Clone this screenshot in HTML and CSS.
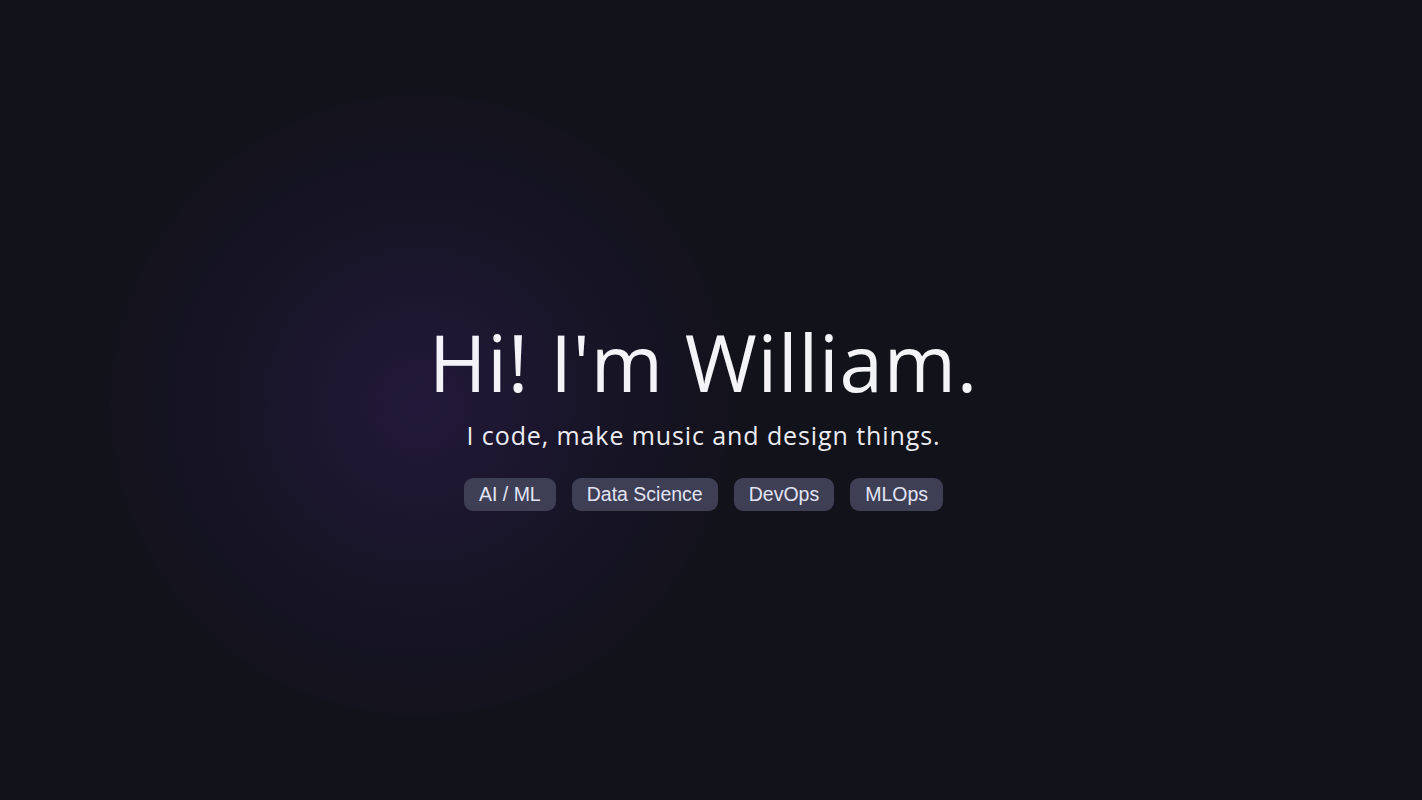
FILE: index.html
```html
<!DOCTYPE html>
<html lang="en">
<head>
<meta charset="utf-8">
<title>William</title>
<link rel="stylesheet" href="styles.css">
</head>
<body>
<main class="hero">
  <div class="glow"></div>
  <div class="content">
    <h1 class="title">Hi! I'm William.</h1>
    <p class="subtitle">I code, make music and design things.</p>
    <ul class="tags">
      <li class="tag">AI / ML</li>
      <li class="tag">Data Science</li>
      <li class="tag">DevOps</li>
      <li class="tag">MLOps</li>
    </ul>
  </div>
</main>
</body>
</html>
```

FILE: styles.css
```css
html, body {
  margin: 0;
  padding: 0;
  height: 100%;
}
body {
  background: #12121b;
  overflow: hidden;
}
.hero {
  position: relative;
  height: 800px;
  display: flex;
  align-items: center;
  justify-content: center;
  padding-right: 15px;
  box-sizing: border-box;
}
.glow {
  position: absolute;
  left: 110px;
  top: 95px;
  width: 620px;
  height: 620px;
  border-radius: 50%;
  background: radial-gradient(circle at center, rgba(40, 28, 70, 0.72) 0%, rgba(32, 24, 56, 0.5) 35%, rgba(24, 20, 40, 0.2) 65%, rgba(18, 18, 27, 0) 100%);
}
.content {
  position: relative;
  display: flex;
  flex-direction: column;
  align-items: center;
  margin-top: 34px;
}
.title {
  margin: 0;
  font-family: "Open Sans", sans-serif;
  font-weight: 400;
  font-size: 78px;
  line-height: 1;
  color: #f4f4f8;
  letter-spacing: 0.8px;
}
.subtitle {
  margin: 19px 0 0;
  font-family: "Open Sans", sans-serif;
  font-size: 25px;
  line-height: 1.2;
  color: #ececf2;
  letter-spacing: 0.9px;
}
.tags {
  list-style: none;
  margin: 28px 0 0;
  padding: 0;
  display: flex;
  gap: 16px;
}
.tag {
  font-family: "Liberation Sans", Arial, sans-serif;
  font-size: 19.5px;
  line-height: 33px;
  height: 33px;
  padding: 0 15px;
  border-radius: 9px;
  background: #3e3e55;
  color: #e2e4f4;
}
```
